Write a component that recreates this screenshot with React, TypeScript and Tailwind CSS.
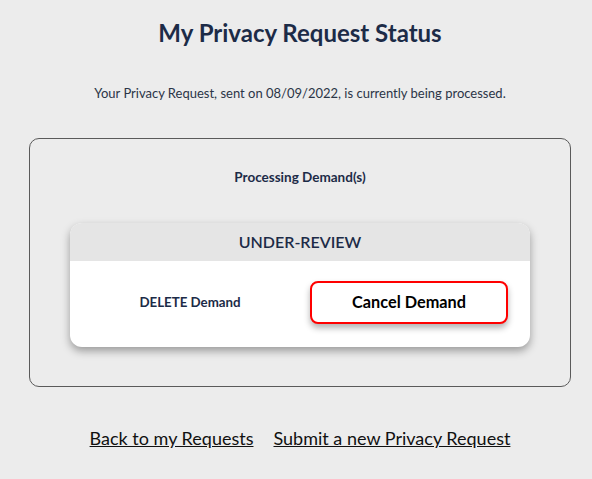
import React from "react";

export default function App() {
  return (
    <div className="w-[592px] h-[479px] bg-[#ececec] overflow-hidden">
      <div
        className="w-[600px] flex flex-col items-center"
        style={{ fontFamily: 'Lato, "Open Sans", sans-serif' }}
      >
        <h1 className="mt-[18px] text-[24px] leading-[30px] font-bold text-[#1c2b47]">My Privacy Request Status</h1>
        <p className="mt-[36px] text-[13px] leading-[18px] text-[#2b3547]">
          Your Privacy Request, sent on 08/09/2022, is currently being processed.
        </p>
        <div className="mt-[36px] w-[542px] h-[249px] border border-[#5a5a5a] rounded-[10px] flex flex-col items-center">
          <p className="mt-[29px] text-[13.5px] leading-[18px] font-bold text-[#1c2b47]">Processing Demand(s)</p>
          <div className="mt-[37px] w-[460px] rounded-[12px] bg-white overflow-hidden shadow-[0_4px_8px_rgba(0,0,0,0.35)]">
            <div className="h-[38px] bg-[#e5e5e5] flex items-center justify-center text-[16px] font-semibold text-[#1c2b47]">
              UNDER-REVIEW
            </div>
            <div className="h-[86px] flex items-start pt-[20px]">
              <div className="w-[240px] h-[43px] flex items-center justify-center text-[13.3px] font-bold text-[#1c2b47]">
                DELETE Demand
              </div>
              <button className="w-[198px] h-[43px] border-2 border-[#ff0000] rounded-[8px] bg-white text-[16.3px] font-bold text-black shadow-[0_4px_6px_rgba(0,0,0,0.3)]">
                Cancel Demand
              </button>
            </div>
          </div>
        </div>
        <div className="mt-[38px] flex gap-[20px] text-[18px] text-[#111]">
          <a className="underline" href="#">Back to my Requests</a>
          <a className="underline" href="#">Submit a new Privacy Request</a>
        </div>
      </div>
    </div>
  );
}
